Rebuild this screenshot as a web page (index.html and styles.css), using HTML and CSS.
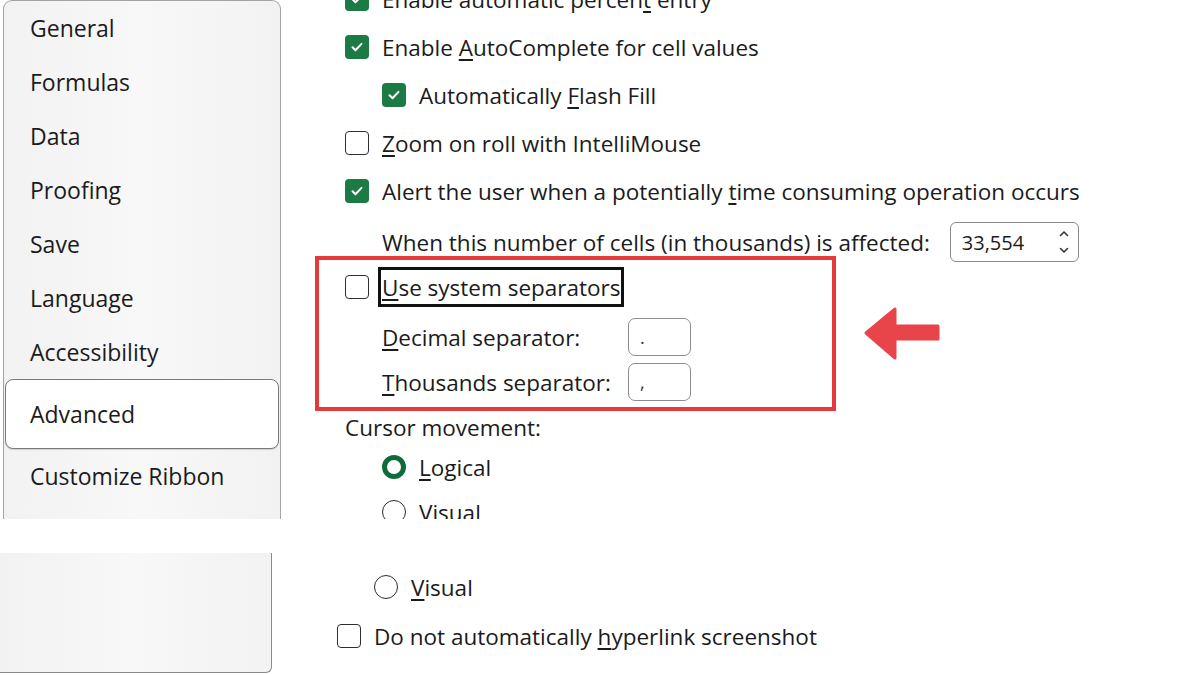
FILE: index.html
```html
<!DOCTYPE html>
<html lang="en">
<head>
<meta charset="utf-8">
<title>Excel Options - Advanced</title>
<link rel="stylesheet" href="styles.css">
</head>
<body>
<div class="top">
  <aside class="nav">
    <div class="nav-item">General</div>
    <div class="nav-item">Formulas</div>
    <div class="nav-item">Data</div>
    <div class="nav-item">Proofing</div>
    <div class="nav-item">Save</div>
    <div class="nav-item">Language</div>
    <div class="nav-item">Accessibility</div>
    <div class="nav-item active">Advanced</div>
    <div class="nav-item">Customize Ribbon</div>
  </aside>
  <main class="content">
    <div class="row"><span class="cb on"><svg viewBox="0 0 24 24"><path d="M7.5 12.3l3 3 6-6.4"/></svg></span><span class="lbl">Enable automatic percen<u>t</u> entry</span></div>
    <div class="row"><span class="cb on"><svg viewBox="0 0 24 24"><path d="M7.5 12.3l3 3 6-6.4"/></svg></span><span class="lbl">Enable <u>A</u>utoComplete for cell values</span></div>
    <div class="row indent"><span class="cb on"><svg viewBox="0 0 24 24"><path d="M7.5 12.3l3 3 6-6.4"/></svg></span><span class="lbl">Automatically <u>F</u>lash Fill</span></div>
    <div class="row"><span class="cb"></span><span class="lbl"><u>Z</u>oom on roll with IntelliMouse</span></div>
    <div class="row"><span class="cb on"><svg viewBox="0 0 24 24"><path d="M7.5 12.3l3 3 6-6.4"/></svg></span><span class="lbl">Alert the user when a potentially <u>t</u>ime consuming operation occurs</span></div>
    <div class="row indent sp-l"><span class="lbl">When this number of cells (in thousands) is affected:</span>
      <span class="spinner"><span class="spin-val">33,554</span><svg class="chev" viewBox="0 0 12 30"><path d="M2.5 8.5l3.5-3.5 3.5 3.5M2.5 21.5l3.5 3.5 3.5-3.5"/></svg></span>
    </div>
    <div class="row sp-s"><span class="cb"></span><span class="lbl focus"><u>U</u>se system separators</span></div>
    <div class="row indent sp-m"><span class="lbl fixed"><u>D</u>ecimal separator:</span><span class="field">.</span></div>
    <div class="row indent sp-s"><span class="lbl fixed"><u>T</u>housands separator:</span><span class="field">,</span></div>
    <div class="row sp-s"><span class="lbl">Cursor movement:</span></div>
    <div class="row indent sp-0"><span class="radio on"></span><span class="lbl"><u>L</u>ogical</span></div>
    <div class="row indent sp-s"><span class="radio"></span><span class="lbl"><u>V</u>isual</span></div>
  </main>
  <div class="callout"></div>
  <svg class="arrow" viewBox="0 0 80 56"><path d="M6 29L35 5V22H78V35H35V54Z"/></svg>
</div>
<div class="bottom">
  <aside class="nav2"></aside>
  <main class="content2">
    <div class="row indent"><span class="radio"></span><span class="lbl"><u>V</u>isual</span></div>
    <div class="row"><span class="cb"></span><span class="lbl">Do not automatically <u>h</u>yperlink screenshot</span></div>
  </main>
</div>
</body>
</html>
```
FILE: styles.css
```css
html, body {
  margin: 0;
  padding: 0;
  background: #ffffff;
}
body {
  width: 1200px;
  height: 675px;
  overflow: hidden;
  font-family: "Open Sans", "Noto Sans", sans-serif;
  color: #1b1b1b;
}
.top {
  position: relative;
  display: flex;
  height: 519px;
  overflow: hidden;
}
.nav {
  flex: none;
  width: 278px;
  margin-left: 3px;
  box-sizing: border-box;
  border: 1px solid #a3a3a3;
  border-bottom: none;
  border-radius: 9px 9px 0 0;
  background: linear-gradient(90deg, #f2f2f2 0%, #f8f8f8 50%, #f2f2f2 100%);
}
.nav-item {
  height: 54px;
  display: flex;
  align-items: center;
  padding-left: 26px;
  font-size: 23px;
}
.nav-item.active {
  height: 68px;
  margin: 0 1px;
  padding-left: 24px;
  background: #ffffff;
  border: 1px solid #7a7a7a;
  border-radius: 8px;
  box-shadow: 0 1px 1px rgba(0,0,0,0.15);
}
.content {
  flex: 1;
  padding-left: 64px;
  margin-top: -21px;
}
.content2 {
  flex: 1;
  padding-left: 65px;
  padding-top: 14px;
}
.row {
  display: flex;
  align-items: center;
  height: 40px;
  margin-top: 8px;
  gap: 13px;
  font-size: 22.5px;
  white-space: nowrap;
}
.content .row:first-child,
.content2 .row:first-child {
  margin-top: 0;
}
.row.sp-l { margin-top: 11px; }
.row.sp-m { margin-top: 10px; }
.row.sp-s { margin-top: 5px; }
.row.sp-0 { margin-top: 0; }
.row.indent { padding-left: 37px; }
.content2 .row { margin-top: 9px; }
.content2 .row:first-child { margin-top: 0; }
u {
  text-decoration-thickness: 1.5px;
  text-underline-offset: 3px;
}
.cb {
  flex: none;
  width: 24px;
  height: 24px;
  box-sizing: border-box;
  border: 1.6px solid #2e2e2e;
  border-radius: 4px;
  background: #fff;
  display: flex;
}
.cb.on {
  border: none;
  background: #1c7a45;
}
.cb svg {
  width: 24px;
  height: 24px;
}
.cb svg path {
  fill: none;
  stroke: #ffffff;
  stroke-width: 2;
  stroke-linecap: round;
  stroke-linejoin: round;
}
.radio {
  flex: none;
  width: 24px;
  height: 24px;
  box-sizing: border-box;
  border: 1.6px solid #2b2b2b;
  border-radius: 50%;
  background: #fff;
}
.radio.on {
  border: 5.5px solid #0f6c3a;
}
.lbl.focus {
  margin-left: -4px;
  padding: 0 1px 0 1px;
  height: 40px;
  box-sizing: border-box;
  border: 3px solid #111;
  display: flex;
  align-items: center;
}
.lbl.fixed {
  width: 233px;
}
.field {
  flex: none;
  width: 63px;
  height: 38px;
  box-sizing: border-box;
  border: 1px solid #8c8c8c;
  border-radius: 7px;
  padding-left: 11px;
  display: flex;
  align-items: center;
  font-size: 18px;
  color: #333;
}
.spinner {
  flex: none;
  margin-left: 7px;
  width: 129px;
  height: 40px;
  box-sizing: border-box;
  border: 1px solid #8a8a8a;
  border-radius: 6px;
  display: flex;
  align-items: center;
  justify-content: space-between;
  padding: 0 8px 0 11px;
  font-size: 20px;
}
.chev {
  width: 12px;
  height: 30px;
}
.chev path {
  fill: none;
  stroke: #333;
  stroke-width: 1.6;
  stroke-linecap: round;
  stroke-linejoin: round;
}
.callout {
  position: absolute;
  left: 315px;
  top: 256px;
  width: 521px;
  height: 155px;
  box-sizing: border-box;
  border: 4px solid #e5393d;
  pointer-events: none;
}
.arrow {
  position: absolute;
  left: 860px;
  top: 304px;
  width: 80px;
  height: 56px;
}
.arrow path {
  fill: #e84449;
  stroke: #e84449;
  stroke-width: 3;
  stroke-linejoin: round;
}
.bottom {
  display: flex;
  height: 120px;
  margin-top: 34px;
}
.nav2 {
  flex: none;
  width: 272px;
  height: 120px;
  box-sizing: border-box;
  border-right: 1px solid #8a8a8a;
  border-bottom: 1px solid #8a8a8a;
  border-bottom-right-radius: 6px;
  background: linear-gradient(90deg, #f2f2f2 0%, #f8f8f8 50%, #f2f2f2 100%);
}
```
